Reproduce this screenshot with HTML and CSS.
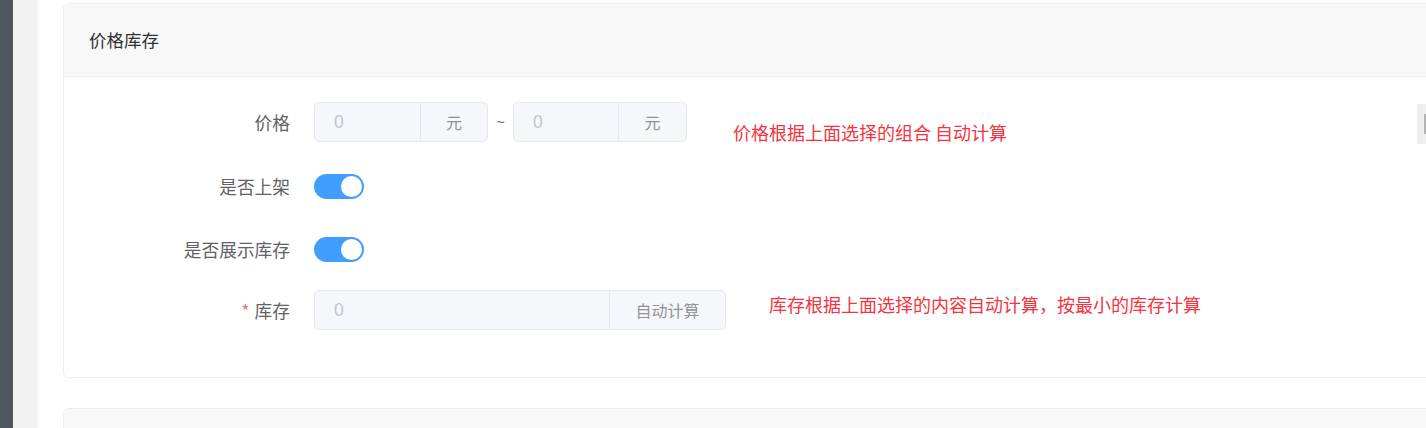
FILE: index.html
```html
<!DOCTYPE html>
<html lang="zh">
<head>
<meta charset="utf-8">
<link rel="stylesheet" href="styles.css">
</head>
<body>
<div class="layout">
  <aside class="sidebar"></aside>
  <div class="strip"></div>
  <main class="main">
    <section class="card">
      <div class="card-header">价格库存</div>
      <div class="card-body">
        <div class="form-item">
          <label class="form-label">价格</label>
          <div class="form-content">
            <div class="input-group w174">
              <div class="input">0</div>
              <div class="append a67">元</div>
            </div>
            <span class="tilde">~</span>
            <div class="input-group w174">
              <div class="input">0</div>
              <div class="append a68">元</div>
            </div>
            <span class="tip tip-price">价格根据上面选择的组合 自动计算</span>
          </div>
        </div>
        <div class="form-item">
          <label class="form-label">是否上架</label>
          <div class="form-content">
            <span class="switch"><span class="knob"></span></span>
          </div>
        </div>
        <div class="form-item">
          <label class="form-label">是否展示库存</label>
          <div class="form-content">
            <span class="switch"><span class="knob"></span></span>
          </div>
        </div>
        <div class="form-item">
          <label class="form-label"><span class="req">*</span>库存</label>
          <div class="form-content">
            <div class="input-group w412">
              <div class="input">0</div>
              <div class="append a117">自动计算</div>
            </div>
            <span class="tip tip-stock">库存根据上面选择的内容自动计算，按最小的库存计算</span>
          </div>
        </div>
      </div>
      <div class="edge-scroll"><span class="edge-bar"></span></div>
    </section>
    <section class="card card-next">
      <div class="card-header"></div>
    </section>
  </main>
</div>
</body>
</html>
```

FILE: styles.css
```css
* { box-sizing: border-box; }
html, body { margin: 0; padding: 0; }
body {
  width: 1426px;
  height: 428px;
  overflow: hidden;
  font-family: "Noto Sans CJK SC", "Liberation Sans", sans-serif;
  font-size: 17.5px;
  color: #303133;
  background: #fff;
}
.layout { display: flex; height: 428px; }
.sidebar { width: 13px; flex: none; background: #50565e; }
.strip { width: 25px; flex: none; background: #f2f2f2; }
.main { flex: 1; padding: 3px 0 0 25px; overflow: hidden; }
.card {
  position: relative;
  width: 1400px;
  border: 1px solid #ebeef5;
  border-radius: 5px;
  background: #fff;
}
.card-header {
  height: 73px;
  padding: 0 25px;
  display: flex;
  align-items: center;
  background: #f8f8f8;
  border-bottom: 1px solid #ebeef5;
  border-radius: 5px 5px 0 0;
  color: #303133;
  font-size: 17.5px;
  line-height: 1;
}
.card-body { padding: 25px 25px 23px 24px; }
.form-item { display: flex; align-items: flex-start; margin-bottom: 24px; }
.form-item:nth-child(2) { margin-bottom: 23px; }
.form-item:nth-child(3) { margin-bottom: 21px; }
.form-label {
  width: 226px;
  flex: none;
  height: 40px;
  line-height: 40px;
  text-align: right;
  padding-right: 24px;
  color: #606266;
  font-size: 17.7px;
}
.req { color: #f56c6c; margin-right: 5px; }
.form-content { display: flex; align-items: center; height: 40px; }
.input-group {
  display: flex;
  height: 40px;
  border: 1px solid #e4e7ed;
  border-radius: 5px;
  background: #f5f7fa;
  overflow: hidden;
}
.w174 { width: 174px; }
.w412 { width: 412px; }
.input {
  flex: 1;
  padding: 0 19px;
  line-height: 38px;
  color: #c0c4cc;
  font-size: 17.5px;
  font-family: "Liberation Sans", "Noto Sans CJK SC", sans-serif;
}
.append {
  flex: none;
  border-left: 1px solid #e4e7ed;
  text-align: center;
  line-height: 38px;
  color: #909399;
  font-size: 16px;
}
.a67 { width: 67px; }
.a68 { width: 68px; }
.a117 { width: 116px; }
.tilde {
  width: 25px;
  text-align: center;
  color: #606266;
  font-size: 14px;
  font-family: "Liberation Sans", sans-serif;
}
.tip { color: #f5333f; font-size: 18px; white-space: nowrap; }
.tip-price { margin-left: 46px; position: relative; top: 10px; }
.tip-stock { margin-left: 43px; position: relative; top: -6px; }
.switch {
  position: relative;
  display: inline-block;
  width: 50px;
  height: 25px;
  border-radius: 13px;
  background: #409eff;
}
.knob {
  position: absolute;
  top: 2px;
  right: 2px;
  width: 21px;
  height: 21px;
  border-radius: 50%;
  background: #fff;
}
.edge-scroll {
  position: absolute;
  left: 1353px;
  top: 100px;
  width: 12px;
  height: 40px;
  background: #efefef;
}
.edge-bar {
  position: absolute;
  left: 7px;
  top: 10px;
  width: 3px;
  height: 20px;
  background: #b3b3b3;
}
.card-next { margin-top: 30px; }
.card-next .card-header { height: 60px; border-bottom: none; }
```
